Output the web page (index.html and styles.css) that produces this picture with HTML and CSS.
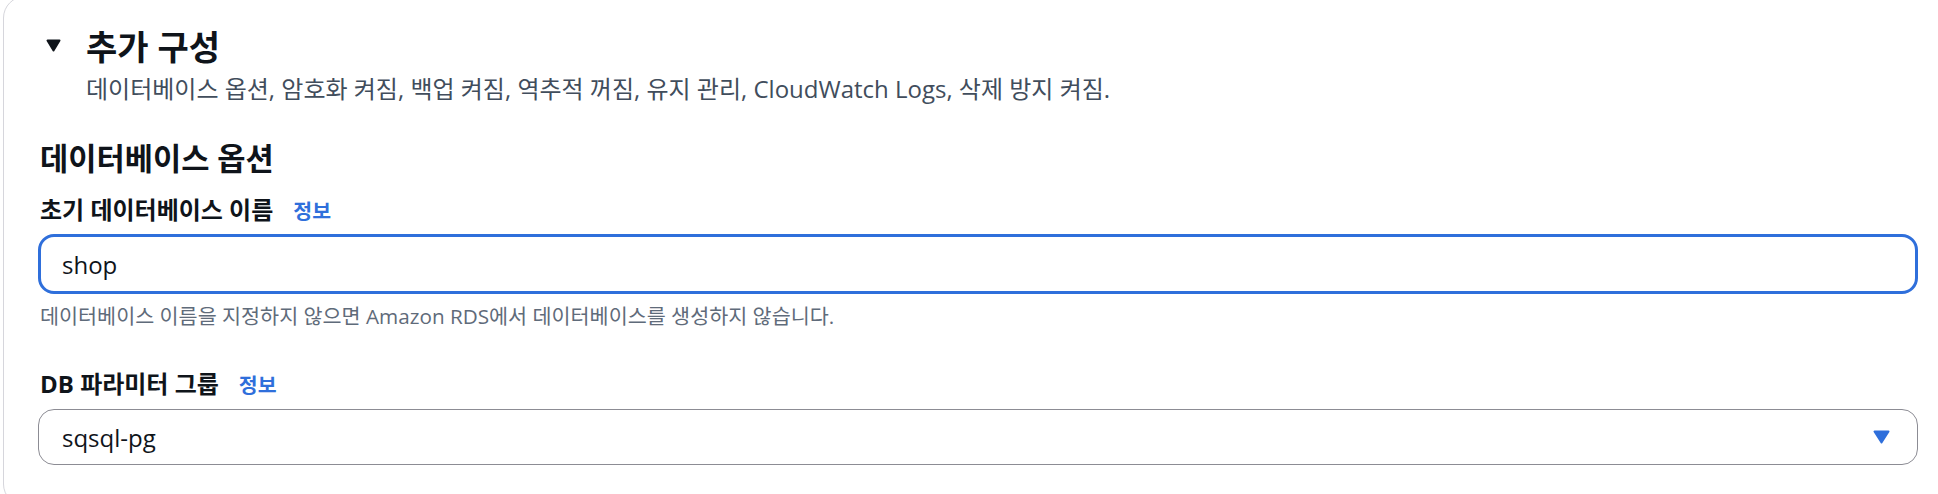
FILE: index.html
```html
<!DOCTYPE html>
<html lang="ko">
<head>
<meta charset="utf-8">
<title>추가 구성</title>
<link rel="stylesheet" href="styles.css">
</head>
<body>
<div class="container">
  <div class="exp-header">
    <svg class="exp-caret" width="15" height="13" viewBox="0 0 15 13"><path d="M1.5 1.5h12L7.5 11.5z" fill="#0f141a" stroke="#0f141a" stroke-width="2" stroke-linejoin="round"/></svg>
    <h2 class="exp-title">추가 구성</h2>
  </div>
  <p class="exp-desc">데이터베이스 옵션, 암호화 켜짐, 백업 켜짐, 역추적 꺼짐, 유지 관리, CloudWatch Logs, 삭제 방지 켜짐.</p>

  <section class="section">
    <h3 class="section-title">데이터베이스 옵션</h3>

    <div class="field">
      <div class="label-row"><span class="label">초기 데이터베이스 이름</span><a class="info">정보</a></div>
      <div class="input input-focused">shop</div>
      <div class="hint">데이터베이스 이름을 지정하지 않으면 Amazon RDS에서 데이터베이스를 생성하지 않습니다.</div>
    </div>

    <div class="field field-2">
      <div class="label-row"><span class="label">DB 파라미터 그룹</span><a class="info">정보</a></div>
      <div class="select">
        <span class="select-value">sqsql-pg</span>
        <svg class="select-caret" width="17" height="14" viewBox="0 0 17 14"><path d="M1.5 1.5h14L8.5 12.5z" fill="#2f6fdb" stroke="#2f6fdb" stroke-width="2" stroke-linejoin="round"/></svg>
      </div>
    </div>
  </section>
</div>
</body>
</html>
```

FILE: styles.css
```css
html, body {
  margin: 0;
  padding: 0;
  background: #ffffff;
}

body {
  font-family: "Open Sans", "Noto Sans CJK KR", sans-serif;
  color: #0f141a;
  overflow: hidden;
}

.container {
  box-sizing: border-box;
  width: 1950px;
  margin-left: 3px;
  margin-top: -4px;
  border: 1px solid #d6d6dc;
  border-radius: 22px;
  padding: 31px 34px 40px 34px;
  background: #ffffff;
}

.exp-header {
  display: flex;
  align-items: flex-start;
  padding-left: 8px;
  gap: 25px;
}

.exp-caret {
  display: block;
  flex: none;
  margin-top: 11px;
}

.exp-title {
  margin: 0;
  font-size: 34px;
  line-height: 38px;
  font-weight: 700;
  color: #0f141a;
}

.exp-desc {
  margin: 8px 0 0 48px;
  font-size: 24px;
  line-height: 30px;
  color: #414d5c;
}

.section {
  margin-top: 35px;
}

.section-title {
  margin: 0;
  font-size: 30.7px;
  line-height: 38px;
  font-weight: 700;
  color: #0f141a;
  padding-left: 2px;
}

.field {
  margin-top: 18px;
}

.field-2 {
  margin-top: 40px;
}

.label-row {
  display: flex;
  align-items: baseline;
  padding-left: 2px;
}

.label {
  font-size: 24px;
  line-height: 30px;
  font-weight: 700;
  color: #0f141a;
}

.info {
  margin-left: 20px;
  font-size: 20.5px;
  line-height: 30px;
  font-weight: 700;
  color: #2f6fdb;
  text-decoration: none;
}

.input {
  box-sizing: border-box;
  margin-top: 8px;
  height: 60px;
  border: 2px solid #8c8c94;
  border-radius: 16px;
  padding: 0 22px;
  display: flex;
  align-items: center;
  font-size: 24px;
  color: #0f141a;
}

.input-focused {
  border: 3px solid #2f6fdb;
  padding-left: 21px;
}

.hint {
  margin-top: 9px;
  padding-left: 2px;
  font-size: 20.7px;
  line-height: 26px;
  color: #5f6b7a;
}

.select {
  box-sizing: border-box;
  margin-top: 9px;
  height: 56px;
  border: 1.5px solid #8c8c94;
  border-radius: 16px;
  padding: 0 27px 0 23px;
  display: flex;
  align-items: center;
  justify-content: space-between;
  font-size: 24px;
  color: #0f141a;
}

.select-caret {
  display: block;
  flex: none;
}
```
